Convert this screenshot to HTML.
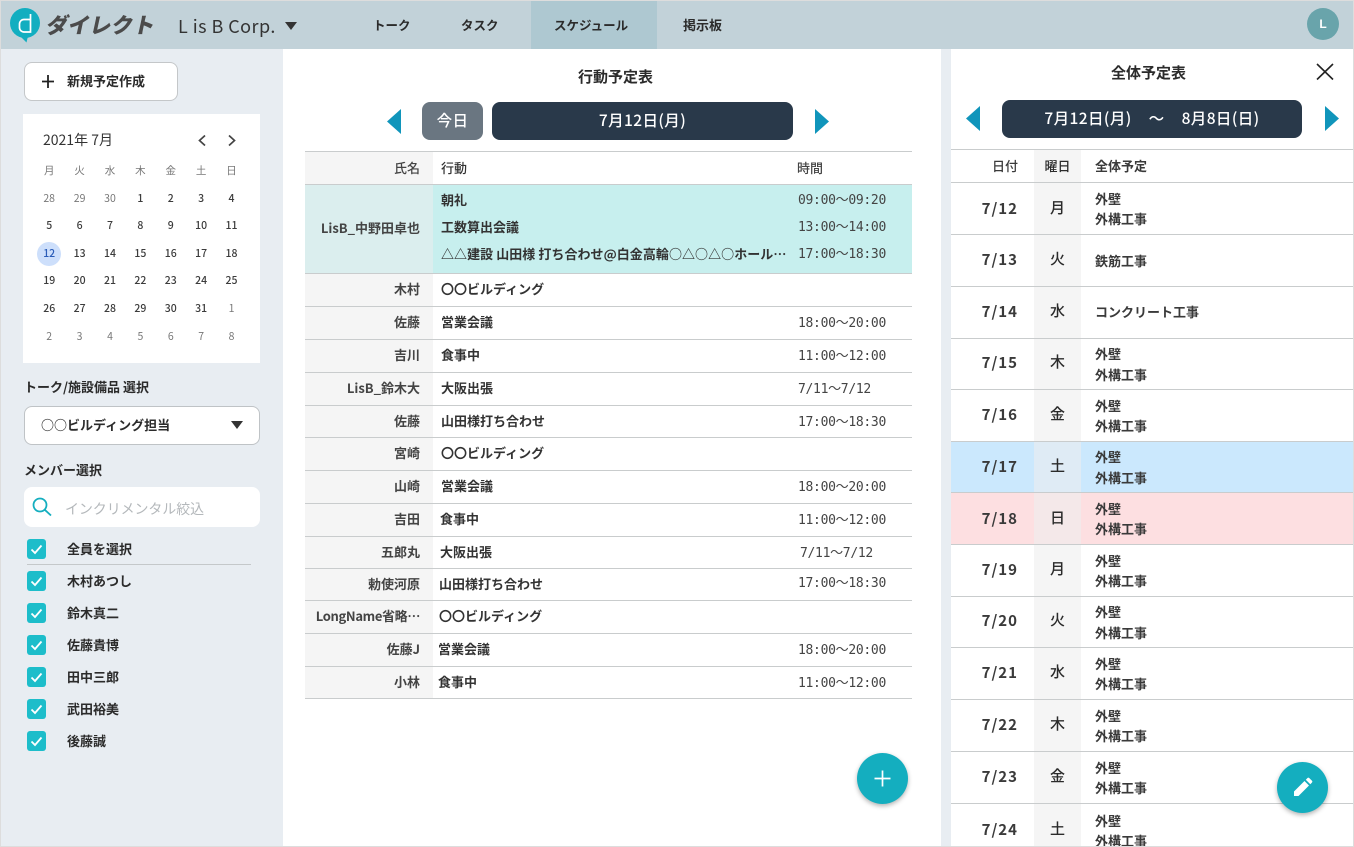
<!DOCTYPE html>
<html lang="ja"><head><meta charset="utf-8"><title>スケジュール</title>
<style>
html,body{margin:0;padding:0;width:1354px;height:847px;overflow:hidden}
#w{position:absolute;left:0;top:0;width:1354px;height:847px;overflow:hidden;background:#e8edf2;color:#2b2b2b;font-family:"Noto Sans CJK JP","Liberation Sans",sans-serif}
*{box-sizing:border-box}
.a{position:absolute}
.t{position:absolute;white-space:nowrap;line-height:20px;height:20px;font-size:13px;font-weight:700}
.row{position:absolute;left:305px;width:607px;border-bottom:1px solid #c9cccd;background:#fff}
.row .n{position:absolute;left:0;top:0;bottom:0;width:128px;background:#f5f5f5;text-align:right;padding-right:13px;font-size:13px;font-weight:700;color:#444;white-space:nowrap;line-height:30px}
.row .c{position:absolute;left:136px;font-size:13px;font-weight:700;white-space:nowrap;color:#333;line-height:30px}
.row .m{position:absolute;left:493px;top:7px;font:13px/20px "DejaVu Sans Mono",monospace;letter-spacing:-.3px;color:#444;white-space:nowrap}
.row.h{background:#c7efee}.row.h .n{background:#dbeeee}
.r{position:absolute;left:951px;width:402px;border-bottom:1px solid #c9cccd;background:#fff}
.r .d{position:absolute;left:0;width:67px;text-align:right;top:50%;margin-top:-11px;font-size:15px;font-weight:700;line-height:22px;letter-spacing:1px;color:#3a3a3a}
.r .w{position:absolute;left:83px;width:47px;top:0;bottom:0;background:#f5f5f5;text-align:center;font-size:15px;font-weight:500}
.r .w span{position:absolute;left:0;right:0;top:50%;margin-top:-12px;line-height:22px}
.r.u .d{margin-top:-12px}
.r.u .w span{margin-top:-13px}
.r .x{position:absolute;left:144px;top:50%;margin-top:-20px;font-size:13px;line-height:20.5px;font-weight:700;color:#3a3a3a;white-space:nowrap}
.r.o .x{margin-top:-10px}
.b{background:#cbe8fd}.b .w{background:#dfebf5}
.p{background:#fddfe1}.p .w{background:#f4e8e9}
.cal{position:absolute;left:34px;top:157px;display:grid;grid-template-columns:repeat(7,30.4px);grid-auto-rows:27.6px;text-align:center;font-size:10.5px;line-height:27.6px;font-weight:500;color:#3c3c3c}
.cal i{font-style:normal;color:#777;font-weight:400}
.ck{position:absolute;left:27px;width:19px;height:20px;background:#1dbdca;border-radius:3px}
.ck svg{display:block;width:19px;height:20px}
.fab{position:absolute;width:51px;height:51px;border-radius:50%;background:#14aebf;box-shadow:0 2px 5px rgba(0,0,0,.3)}
.btn{position:absolute;background:#29394a;color:#fff;border-radius:8px;text-align:center;font-size:15.5px;font-weight:500;letter-spacing:.4px;white-space:nowrap}
</style></head><body><div id="w">
<!-- top and panels -->
<div class="a" style="left:0;top:0;width:1354px;height:1px;background:#ddd"></div>
<div class="a" style="left:1px;top:1px;width:1352px;height:48px;background:#c2d2d9"></div>
<div class="a" style="left:531px;top:1px;width:126px;height:48px;background:#aec8d1"></div>
<div class="a" style="left:0;top:0;width:1px;height:847px;background:#ddd"></div>
<div class="a" style="left:1353px;top:0;width:1px;height:847px;background:#ddd"></div>
<div class="a" style="left:283px;top:49px;width:658px;height:798px;background:#fff"></div>
<div class="a" style="left:951px;top:49px;width:402px;height:798px;background:#fff"></div>

<!-- logo -->
<svg class="a" style="left:9px;top:7px" width="34" height="36" viewBox="0 0 34 36"><circle cx="16" cy="16" r="15" fill="#12aec0"/><path d="M11 29 17.500 35.500 19 29z" fill="#12aec0"/><path d="M21.500 7v18h-6.500a4.500 4.500 0 0 1-4.500-4.500v-3.500a4.500 4.500 0 0 1 4.500-4.500h6.500" fill="none" stroke="#fff" stroke-width="1.700"/></svg>
<div class="t" style="left:47px;top:13px;height:24px;line-height:24px;font-size:21.5px;font-weight:900;color:#4b4b4b;transform:skewX(-12deg);letter-spacing:.2px">ダイレクト</div>
<div class="t" style="left:178px;top:16px;font-size:18px;font-weight:400;color:#333;letter-spacing:.45px">L is B Corp.</div>
<div class="a" style="left:285px;top:22px;border-left:6.5px solid transparent;border-right:6.5px solid transparent;border-top:8px solid #333"></div>
<div class="t" style="left:373px;top:15px;font-size:12.5px">トーク</div>
<div class="t" style="left:461px;top:15px;font-size:12.5px">タスク</div>
<div class="t" style="left:554px;top:15px;font-size:12.5px">スケジュール</div>
<div class="t" style="left:683px;top:15px;font-size:13px">掲示板</div>
<div class="a" style="left:1307px;top:8px;width:32px;height:32px;border-radius:50%;background:#69a4ab;color:#fff;text-align:center;font:bold 12px/32px 'Liberation Sans',sans-serif">L</div>

<!-- sidebar -->
<div class="a" style="left:24px;top:62px;width:154px;height:39px;background:#fff;border:1px solid #c4c7c9;border-radius:8px"></div>
<svg class="a" style="left:42px;top:75px" width="12" height="13"><path d="M6 0v13M0 6.500h12" stroke="#222" stroke-width="1.800"/></svg>
<div class="t" style="left:67px;top:71px">新規予定作成</div>
<div class="a" style="left:23px;top:114px;width:237px;height:249px;background:#fff"></div>
<div class="t" style="left:43px;top:130px;font-size:14px;font-weight:400;color:#333">2021年 7月</div>
<svg class="a" style="left:196px;top:134px" width="44" height="13" fill="none" stroke="#444" stroke-width="1.700"><path d="M9 1.500 3.500 6.500 9 11.500M33 1.500l5.500 5-5.500 5"/></svg>
<div class="cal">
<i>月</i><i>火</i><i>水</i><i>木</i><i>金</i><i>土</i><i>日</i>
<i>28</i><i>29</i><i>30</i><span>1</span><span>2</span><span>3</span><span>4</span>
<span>5</span><span>6</span><span>7</span><span>8</span><span>9</span><span>10</span><span>11</span>
<span style="position:relative;color:#2a5cb8"><b style="position:absolute;left:3.2px;top:1.8px;width:24px;height:24px;border-radius:50%;background:#cddffb;font-weight:500;line-height:24px">12</b></span><span>13</span><span>14</span><span>15</span><span>16</span><span>17</span><span>18</span>
<span>19</span><span>20</span><span>21</span><span>22</span><span>23</span><span>24</span><span>25</span>
<span>26</span><span>27</span><span>28</span><span>29</span><span>30</span><span>31</span><i>1</i>
<i>2</i><i>3</i><i>4</i><i>5</i><i>6</i><i>7</i><i>8</i>
</div>
<div class="t" style="left:24px;top:377px">トーク/施設備品 選択</div>
<div class="a" style="left:24px;top:406px;width:236px;height:39px;background:#fff;border:1px solid #bfc3c6;border-radius:8px"></div>
<div class="t" style="left:41px;top:415px">○○ビルディング担当</div>
<div class="a" style="left:231px;top:421px;border-left:6.5px solid transparent;border-right:6.5px solid transparent;border-top:8px solid #333"></div>
<div class="t" style="left:24px;top:460px">メンバー選択</div>
<div class="a" style="left:24px;top:487px;width:236px;height:40px;background:#fff;border-radius:8px"></div>
<svg class="a" style="left:32px;top:497px" width="21" height="20" fill="none" stroke="#14aebf" stroke-width="1.800"><circle cx="8" cy="8" r="6.500"/><path d="M12.800 12.800 19 18.500"/></svg>
<div class="t" style="left:65px;top:499px;font-size:14px;font-weight:400;color:#b4b8bb;letter-spacing:-.1px">インクリメンタル絞込</div>

<div class="ck" style="top:539px"><svg viewBox="0 0 19 20"><path d="M4.500 10.500 8 14l6.500-7.500" fill="none" stroke="#fff" stroke-width="1.800"/></svg></div>
<div class="t" style="left:67px;top:539px">全員を選択</div>
<div class="a" style="left:27px;top:564px;width:224px;height:1px;background:#c4c8ca"></div>
<div class="ck" style="top:571px"><svg viewBox="0 0 19 20"><path d="M4.500 10.500 8 14l6.500-7.500" fill="none" stroke="#fff" stroke-width="1.800"/></svg></div>
<div class="t" style="left:67px;top:571px">木村あつし</div>
<div class="ck" style="top:603px"><svg viewBox="0 0 19 20"><path d="M4.500 10.500 8 14l6.500-7.500" fill="none" stroke="#fff" stroke-width="1.800"/></svg></div>
<div class="t" style="left:67px;top:603px">鈴木真二</div>
<div class="ck" style="top:635px"><svg viewBox="0 0 19 20"><path d="M4.500 10.500 8 14l6.500-7.500" fill="none" stroke="#fff" stroke-width="1.800"/></svg></div>
<div class="t" style="left:67px;top:635px">佐藤貴博</div>
<div class="ck" style="top:667px"><svg viewBox="0 0 19 20"><path d="M4.500 10.500 8 14l6.500-7.500" fill="none" stroke="#fff" stroke-width="1.800"/></svg></div>
<div class="t" style="left:67px;top:667px">田中三郎</div>
<div class="ck" style="top:699px"><svg viewBox="0 0 19 20"><path d="M4.500 10.500 8 14l6.500-7.500" fill="none" stroke="#fff" stroke-width="1.800"/></svg></div>
<div class="t" style="left:67px;top:699px">武田裕美</div>
<div class="ck" style="top:731px"><svg viewBox="0 0 19 20"><path d="M4.500 10.500 8 14l6.500-7.500" fill="none" stroke="#fff" stroke-width="1.800"/></svg></div>
<div class="t" style="left:67px;top:731px">後藤誠</div>

<!-- center -->
<div class="t" style="left:578px;top:67px;font-size:15px">行動予定表</div>
<svg class="a" style="left:387px;top:109px" width="15" height="26"><path d="M14 0v25L0 12.500z" fill="#1095bb"/></svg>
<div class="btn" style="left:422px;top:102px;width:61px;height:38px;line-height:36px;background:#6a7681">今日</div>
<div class="btn" style="left:492px;top:102px;width:301px;height:38px;line-height:36px">7月12日(月)</div>
<svg class="a" style="left:815px;top:109px" width="15" height="26"><path d="M0 0v25l14-12.500z" fill="#1095bb"/></svg>

<div class="a" style="left:305px;top:151px;width:607px;height:1px;background:#c9cccd"></div>
<div class="row" style="top:152px;height:33px"><div class="n" style="font-weight:500;line-height:32px">氏名</div><div class="c" style="font-weight:500;line-height:32px">行動</div><div class="m" style="left:492px;top:6px;font:500 13px/20px 'Noto Sans CJK JP',sans-serif;letter-spacing:0">時間</div></div>
<div class="row h" style="top:185px;height:89px"><div class="n" style="line-height:86px">LisB_中野田卓也</div>
<div class="c" style="top:0">朝礼</div><div class="m" style="top:6px">09:00～09:20</div>
<div class="c" style="top:27px">工数算出会議</div><div class="m" style="top:33px">13:00～14:00</div>
<div class="c" style="top:54px;letter-spacing:.05px">△△建設 山田様 打ち合わせ@白金高輪○△○△○ホール…</div><div class="m" style="top:60px">17:00～18:30</div></div>
<div class="row" style="top:274px;height:33px"><div class="n">木村</div><div class="c">〇〇ビルディング</div></div>
<div class="row" style="top:307px;height:33px"><div class="n">佐藤</div><div class="c">営業会議</div><div class="m">18:00～20:00</div></div>
<div class="row" style="top:340px;height:33px"><div class="n">吉川</div><div class="c">食事中</div><div class="m">11:00～12:00</div></div>
<div class="row" style="top:373px;height:33px"><div class="n">LisB_鈴木大</div><div class="c">大阪出張</div><div class="m">7/11～7/12</div></div>
<div class="row" style="top:406px;height:32px"><div class="n">佐藤</div><div class="c">山田様打ち合わせ</div><div class="m">17:00～18:30</div></div>
<div class="row" style="top:438px;height:33px"><div class="n">宮崎</div><div class="c">〇〇ビルディング</div></div>
<div class="row" style="top:471px;height:33px"><div class="n">山崎</div><div class="c">営業会議</div><div class="m">18:00～20:00</div></div>
<div class="row" style="top:504px;height:33px"><div class="n">吉田</div><div class="c" style="left:135px">食事中</div><div class="m">11:00～12:00</div></div>
<div class="row" style="top:537px;height:32px"><div class="n">五郎丸</div><div class="c" style="left:135px">大阪出張</div><div class="m" style="left:495px">7/11～7/12</div></div>
<div class="row" style="top:569px;height:32px"><div class="n">勅使河原</div><div class="c" style="left:134px">山田様打ち合わせ</div><div class="m" style="top:5px">17:00～18:30</div></div>
<div class="row" style="top:601px;height:33px"><div class="n" style="letter-spacing:-.35px">LongName省略…</div><div class="c" style="left:134px">〇〇ビルディング</div></div>
<div class="row" style="top:634px;height:33px"><div class="n">佐藤J</div><div class="c" style="left:133px">営業会議</div><div class="m">18:00～20:00</div></div>
<div class="row" style="top:667px;height:32px"><div class="n">小林</div><div class="c" style="left:133px">食事中</div><div class="m">11:00～12:00</div></div>

<div class="fab" style="left:857px;top:753px"><svg width="51" height="51"><path d="M25.500 17.500v16M17.500 25.500h16" stroke="#fff" stroke-width="1.700"/></svg></div>

<!-- right -->
<div class="t" style="left:1111px;top:63px;font-size:15px">全体予定表</div>
<svg class="a" style="left:1316px;top:63px" width="18" height="18"><path d="M1 1l16 15.500M17 1 1 16.500" stroke="#222" stroke-width="1.600" fill="none"/></svg>
<svg class="a" style="left:966px;top:106px" width="15" height="26"><path d="M14 0v25L0 12.500z" fill="#1095bb"/></svg>
<div class="btn" style="left:1002px;top:100px;width:300px;height:38px;line-height:36px">7月12日(月)<span style="display:inline-block;margin:0 17px">～</span>8月8日(日)</div>
<svg class="a" style="left:1325px;top:106px" width="15" height="26"><path d="M0 0v25l14-12.500z" fill="#1095bb"/></svg>

<div class="a" style="left:951px;top:149px;width:402px;height:1px;background:#c9cccd"></div>
<div class="r" style="top:150px;height:33px"><div class="d" style="font-size:13px;font-weight:500;letter-spacing:0;margin-top:-11px">日付</div><div class="w" style="font-size:13px"><span style="margin-top:-11px">曜日</span></div><div class="x" style="margin-top:-10px">全体予定</div></div>
<div class="r" style="top:183px;height:52px"><div class="d">7/12</div><div class="w"><span>月</span></div><div class="x">外壁<br>外構工事</div></div>
<div class="r o u" style="top:235px;height:52px"><div class="d">7/13</div><div class="w"><span>火</span></div><div class="x">鉄筋工事</div></div>
<div class="r o u" style="top:287px;height:52px"><div class="d">7/14</div><div class="w"><span>水</span></div><div class="x" style="margin-top:-11px">コンクリート工事</div></div>
<div class="r u" style="top:339px;height:51px"><div class="d">7/15</div><div class="w"><span>木</span></div><div class="x">外壁<br>外構工事</div></div>
<div class="r u" style="top:390px;height:52px"><div class="d">7/16</div><div class="w"><span>金</span></div><div class="x">外壁<br>外構工事</div></div>
<div class="r b" style="top:442px;height:51px"><div class="d">7/17</div><div class="w"><span>土</span></div><div class="x">外壁<br>外構工事</div></div>
<div class="r p" style="top:493px;height:52px"><div class="d">7/18</div><div class="w"><span>日</span></div><div class="x">外壁<br>外構工事</div></div>
<div class="r u" style="top:545px;height:52px"><div class="d">7/19</div><div class="w"><span>月</span></div><div class="x">外壁<br>外構工事</div></div>
<div class="r u" style="top:597px;height:51px"><div class="d">7/20</div><div class="w"><span>火</span></div><div class="x">外壁<br>外構工事</div></div>
<div class="r u" style="top:648px;height:52px"><div class="d">7/21</div><div class="w"><span>水</span></div><div class="x">外壁<br>外構工事</div></div>
<div class="r u" style="top:700px;height:52px"><div class="d">7/22</div><div class="w"><span>木</span></div><div class="x">外壁<br>外構工事</div></div>
<div class="r u" style="top:752px;height:52px"><div class="d">7/23</div><div class="w"><span>金</span></div><div class="x">外壁<br>外構工事</div></div>
<div class="r" style="top:804px;height:52px"><div class="d">7/24</div><div class="w"><span>土</span></div><div class="x" style="margin-top:-19px">外壁<br>外構工事</div></div>
<div class="a" style="left:0;top:846px;width:1354px;height:1px;background:#ddd"></div>

<div class="fab" style="left:1277px;top:762px"><svg width="51" height="51"><path d="M17 29.500V34h4.500L32 23.500 27.500 19zM28.800 17.700l4.500 4.500 1.700-1.700a1.200 1.200 0 0 0 0-1.700l-2.800-2.800a1.200 1.200 0 0 0-1.700 0z" fill="#fff"/></svg></div>
</div></body></html>
